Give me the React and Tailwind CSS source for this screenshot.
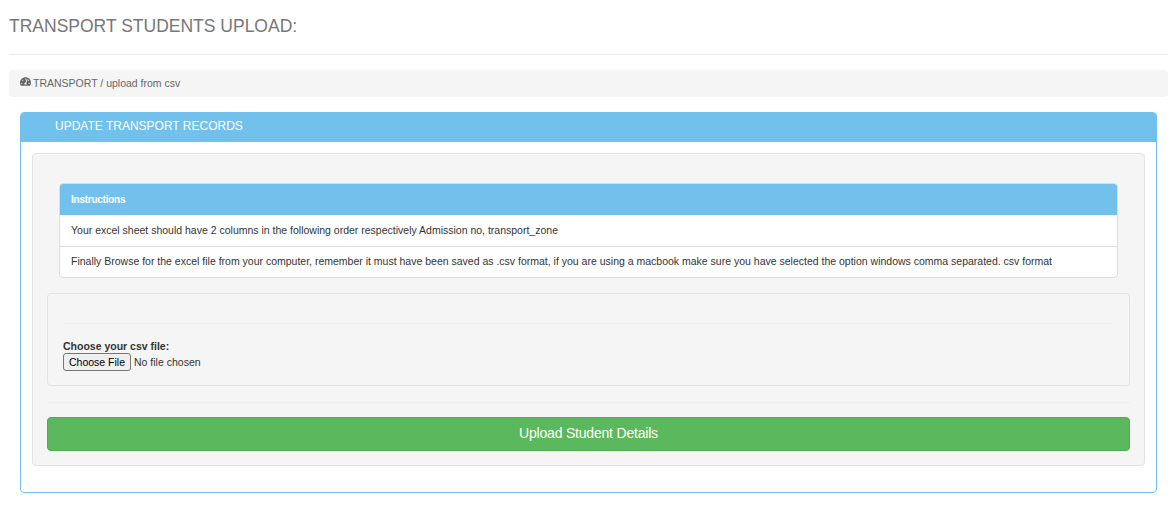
import React from "react";
import { FaTachometerAlt } from "react-icons/fa";

export default function App() {
  return (
    <div className="w-[1170px] h-[511px] overflow-hidden bg-white font-['Liberation_Sans',Arial,sans-serif] text-[#333]">
      <div className="pl-[9px] pr-[2px]">
        <h1 className="h-[54px] pt-[15px] text-[17.5px] leading-[22px] font-normal text-[#777]">TRANSPORT STUDENTS UPLOAD:</h1>
        <hr className="border-0 border-t border-[#eee]" />
        <div className="mt-[15px] h-[27px] rounded-[4px] bg-[#f5f5f5] pl-[11px] flex items-start text-[10.5px] text-[#666]">
          <FaTachometerAlt className="mt-[6px] w-[11px] h-[11px] text-[#666]" />
          <span className="ml-[2px] mt-[7px] leading-[13px]">TRANSPORT / upload from csv</span>
        </div>
      </div>
      <div className="ml-[20px] mt-[15px] w-[1137px] h-[381px] rounded-[4px] border border-[#72c0ec]">
        <div className="h-[29px] bg-[#72c0ec] pl-[34px] text-[12px] leading-[26px] text-white rounded-t-[3px]">UPDATE TRANSPORT RECORDS</div>
        <div className="mx-[11px] mt-[11px] h-[313px] rounded-[4px] border border-[#e3e3e3] bg-[#f5f5f5] px-[14px] pt-[29px]">
          <div className="ml-[12px] mr-[12px] overflow-hidden rounded-[4px] border border-[#ddd] bg-white text-[10.5px]">
            <div className="h-[31px] bg-[#72c0ec] pl-[11px] text-[10px] tracking-[-0.25px] font-bold text-white leading-[31px]">Instructions</div>
            <div className="h-[32px] border-b border-[#ddd] pl-[11px] leading-[31px] text-[#333]">Your excel sheet should have 2 columns in the following order respectively Admission no, transport_zone</div>
            <div className="h-[30px] pl-[11px] leading-[29px] text-[#333]">Finally Browse for the excel file from your computer, remember it must have been saved as .csv format, if you are using a macbook make sure you have selected the option windows comma separated. csv format</div>
          </div>
          <div className="mt-[15px] h-[93px] rounded-[4px] border border-[#e3e3e3] bg-[#f5f5f5] pl-[15px] pr-[16px] pt-[29px]">
            <hr className="border-0 border-t border-[#eee]" />
            <label className="mt-[15px] block text-[10.5px] leading-[14px] font-bold text-[#333]">Choose your csv file:</label>
            <input
              type="file"
              className="block w-[200px] text-[10.5px] leading-[14px] text-[#333] file:mr-[3px] file:h-[18px] file:rounded-[3px] file:border file:border-[#767676] file:bg-[#efefef] file:px-[5px] file:text-[10.5px] file:text-black"
            />
          </div>
          <hr className="mt-[16px] border-0 border-t border-[#eee]" />
          <button className="mt-[14px] block h-[34px] w-full rounded-[4px] border border-[#4cae4c] bg-[#5cb85c] pb-[1px] text-[14px] tracking-[-0.2px] text-white">Upload Student Details</button>
        </div>
      </div>
    </div>
  );
}
